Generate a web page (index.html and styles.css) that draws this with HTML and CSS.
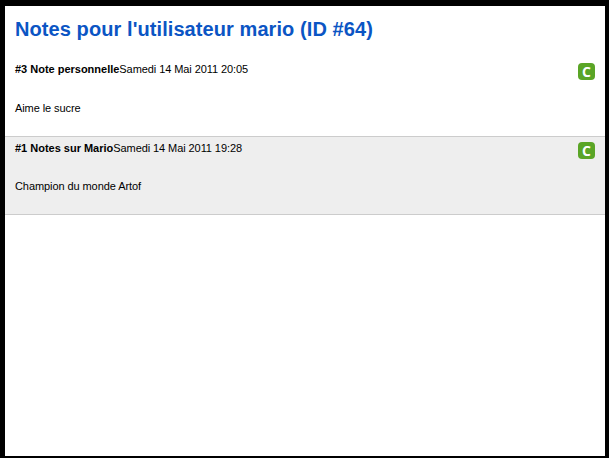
FILE: index.html
```html
<!DOCTYPE html>
<html lang="fr">
<head>
    <meta charset="UTF-8">
    <title>Notes pour l'utilisateur mario</title>
    <link rel="stylesheet" href="styles.css">
</head>
<body>

<div class="page">
    <h1>Notes pour l'utilisateur mario (ID #64)</h1>

    <div class="note">
        <div class="note-head">
            <div><strong>#3 Note personnelle</strong><span class="date">Samedi 14 Mai 2011 20:05</span></div>
            <span class="badge">C</span>
        </div>
        <p>Aime le sucre</p>
    </div>

    <div class="note alt">
        <div class="note-head">
            <div><strong>#1 Notes sur Mario</strong><span class="date">Samedi 14 Mai 2011 19:28</span></div>
            <span class="badge">C</span>
        </div>
        <p>Champion du monde Artof</p>
    </div>
</div>

</body>
</html>
```

FILE: styles.css
```css
html, body {
    height: 100%;
}
body {
    margin: 0;
    background-color: #000;
    font-family: "Liberation Sans", Arial, sans-serif;
    font-size: 11px;
    color: #000;
    padding: 6px 4px 2px 5px;
    box-sizing: border-box;
}
.page {
    background-color: #fff;
    height: 100%;
}
h1 {
    margin: 0;
    padding: 12px 10px 0;
    height: 40px;
    font-size: 20px;
    line-height: 22px;
    letter-spacing: 0.08px;
    color: #0b55c4;
}
.note {
    height: 78px;
    padding: 0 10px;
    border-bottom: 1px solid #ccc;
}
.alt {
    height: 77px;
    background-color: #eee;
}
strong {
    letter-spacing: -0.01px;
}
.date {
    letter-spacing: -0.08px;
}
.note-head {
    display: flex;
    justify-content: space-between;
    padding-top: 5px;
    line-height: 13px;
}
.note p {
    margin: 0;
    padding-top: 22px;
    line-height: 13px;
    letter-spacing: -0.08px;
}
.alt p {
    padding-top: 21px;
}
.badge {
    width: 17px;
    height: 17px;
    background-color: #5aa526;
    color: #fff;
    font-family: "Open Sans", "Liberation Sans", sans-serif;
    font-size: 14px;
    font-weight: bold;
    line-height: 17px;
    text-align: center;
    border-radius: 4px;
}
```
